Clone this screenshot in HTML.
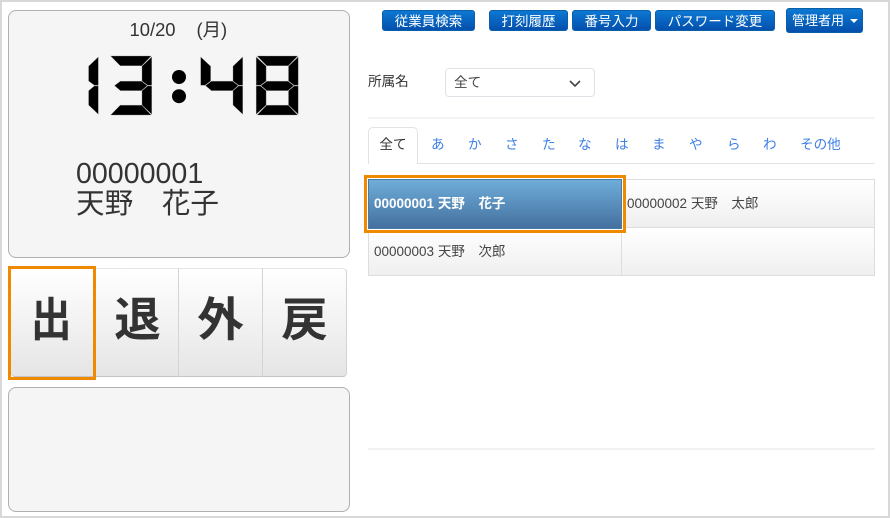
<!DOCTYPE html>
<html lang="ja"><head><meta charset="utf-8"><style>
html,body{margin:0;padding:0;background:#fff}
body{width:890px;height:518px;position:relative;overflow:hidden;font-family:"Liberation Sans","Noto Sans CJK JP",sans-serif;color:#333}
div,span{position:absolute;box-sizing:border-box;white-space:nowrap}
.frame{left:0;top:0;width:890px;height:518px;border:2px solid #d8d8d8;z-index:9;pointer-events:none}
.panel{background:#f5f5f5;border:1px solid #b0b0b0;border-radius:8px}
.btn{height:21px;top:10px;border-radius:3px;background:linear-gradient(#0c78d2,#0350ad);border:1px solid #0b5fa8;color:#fff;font-size:13.5px;line-height:19px;padding-top:1px;text-align:center}
.pb{top:268px;height:109px;background:linear-gradient(#fff,#e5e5e5);border-right:1px solid #d4d4d4;border-bottom:1px solid #c4c4c4;border-top:1px solid #e6e6e6;font-size:46.5px;font-weight:bold;line-height:103px;text-align:center;color:#333}
.tab{top:137px;font-size:13.6px;line-height:16px;color:#3d7fe6}
.cell{background:linear-gradient(#fff,#efefef);border:1px solid #ddd;font-size:13.5px;color:#444;line-height:47px}
.or{border:3px solid #ef8a00;z-index:5}
</style></head><body>
<div class="frame"></div>

<div class="panel" style="left:8px;top:10px;width:342px;height:248px"></div>
<div style="left:129.5px;top:19px;font-size:18.4px;line-height:22px;color:#333">10/20</div>
<div style="left:196.5px;top:19px;font-size:18.4px;line-height:22px;color:#333">(月)</div>
<svg style="position:absolute;left:0;top:0" width="360" height="130">
<defs>
<polygon id="t" points="1,0 41.5,0 32,9.7 10.5,9.7"/>
<polygon id="ul" points="0,1 9.9,10.2 9.9,25 4.3,29.2 0,29.2"/>
<polygon id="ur" points="42,1 32.3,10.2 32.3,25 38,29.2 42,29.2"/>
<polygon id="m" points="4.8,29.6 10.7,25.2 31.7,25.2 37.5,29.6 31.7,34.6 10.7,34.6"/>
<polygon id="ll" points="0,30 4.3,30 9.9,34.8 9.9,49 0,58.2"/>
<polygon id="lr" points="42,30 38,30 32.3,34.8 32.3,49 42,58.2"/>
<polygon id="b" points="10.5,49.2 32,49.2 41.5,59 1,59"/>
</defs>
<g fill="#000" stroke="#8a8a8a" stroke-width=".35">
<g transform="translate(56.3,56)"><use href="#ur"/><use href="#lr"/></g>
<g transform="translate(109.7,56)"><use href="#t"/><use href="#ur"/><use href="#m"/><use href="#lr"/><use href="#b"/></g>
<g transform="translate(200.7,56)"><use href="#ul"/><use href="#ur"/><use href="#m"/><use href="#lr"/></g>
<g transform="translate(256.2,56)"><use href="#t"/><use href="#ul"/><use href="#ur"/><use href="#m"/><use href="#ll"/><use href="#lr"/><use href="#b"/></g>
</g>
<circle cx="179" cy="77" r="7"/><circle cx="179" cy="96.2" r="7"/>
</svg>
<div style="left:76px;top:158px;font-size:28.6px;line-height:32px;color:#333">00000001</div>
<div style="left:76px;top:188px;font-size:28.6px;line-height:32px;color:#333">天野　花子</div>

<div class="pb" style="left:11px;width:84px;border-radius:4px 0 0 4px"><span style="position:static;display:inline-block;transform:translateX(-1px) scaleX(.88)">出</span></div>
<div class="pb" style="left:95px;width:84px"><span style="position:static;display:inline-block;transform:translateX(1px)">退</span></div>
<div class="pb" style="left:179px;width:84px">外</div>
<div class="pb" style="left:263px;width:84px;border-radius:0 4px 4px 0">戻</div>
<div class="or" style="left:8px;top:266px;width:88px;height:114px"></div>

<div class="panel" style="left:8px;top:387px;width:342px;height:125px"></div>

<div class="btn" style="left:382px;width:93px">従業員検索</div>
<div class="btn" style="left:489px;width:79px">打刻履歴</div>
<div class="btn" style="left:572px;width:79px">番号入力</div>
<div class="btn" style="left:655px;width:120px">パスワード変更</div>
<div class="btn" style="left:786px;top:8px;width:77px;height:25px;line-height:23px;padding-top:0;text-align:left;padding-left:5px;font-size:13px">管理者用<span style="left:63px;top:10px;width:0;height:0;border-left:4px solid transparent;border-right:4px solid transparent;border-top:4px solid #fff"></span></div>

<div style="left:368px;top:74px;font-size:13.6px;line-height:16px;color:#333">所属名</div>
<div style="left:445px;top:68px;width:150px;height:29px;border:1px solid #dfe3e8;border-radius:4px;background:#fff;font-size:13.6px;line-height:27px;padding-left:8px;color:#444">全て
<svg style="position:absolute;left:123px;top:11px" width="12" height="8"><path d="M1 1 L6 6 L11 1" fill="none" stroke="#444" stroke-width="1.6"/></svg></div>

<div style="left:368px;top:117px;width:507px;height:2px;background:#f3f3f3"></div>
<div style="left:368px;top:163px;width:507px;height:1px;background:#e3e3e3"></div>
<div style="left:368px;top:127px;width:50px;height:37px;background:#fff;border:1px solid #e3e3e3;border-bottom:0;border-radius:5px 5px 0 0;font-size:13.6px;line-height:34px;text-align:center;color:#333">全て</div>
<span class="tab" style="left:431px">あ</span>
<span class="tab" style="left:468px">か</span>
<span class="tab" style="left:505px">さ</span>
<span class="tab" style="left:542px">た</span>
<span class="tab" style="left:578px">な</span>
<span class="tab" style="left:615px">は</span>
<span class="tab" style="left:652px">ま</span>
<span class="tab" style="left:689px">や</span>
<span class="tab" style="left:727px">ら</span>
<span class="tab" style="left:763px">わ</span>
<span class="tab" style="left:800px">その他</span>

<div class="cell" style="left:621px;top:179px;width:254px;height:49px;padding-left:5px">00000002 天野　太郎</div>
<div class="cell" style="left:368px;top:227px;width:254px;height:49px;padding-left:5px">00000003 天野　次郎</div>
<div class="cell" style="left:621px;top:227px;width:254px;height:49px"></div>
<div style="left:365px;top:176px;width:260px;height:56px;background:#fff;z-index:3"></div>
<div style="left:368px;top:179px;width:254px;height:50px;background:linear-gradient(#6fadd9,#44709f);border:1px solid #4a7aa8;color:#fff;font-size:13.5px;font-weight:bold;line-height:47px;padding-left:5px;z-index:4">00000001 天野　花子</div>
<div class="or" style="left:364px;top:175px;width:262px;height:58px"></div>

<div style="left:368px;top:448px;width:507px;height:2px;background:#f1f1f1"></div>
</body></html>
